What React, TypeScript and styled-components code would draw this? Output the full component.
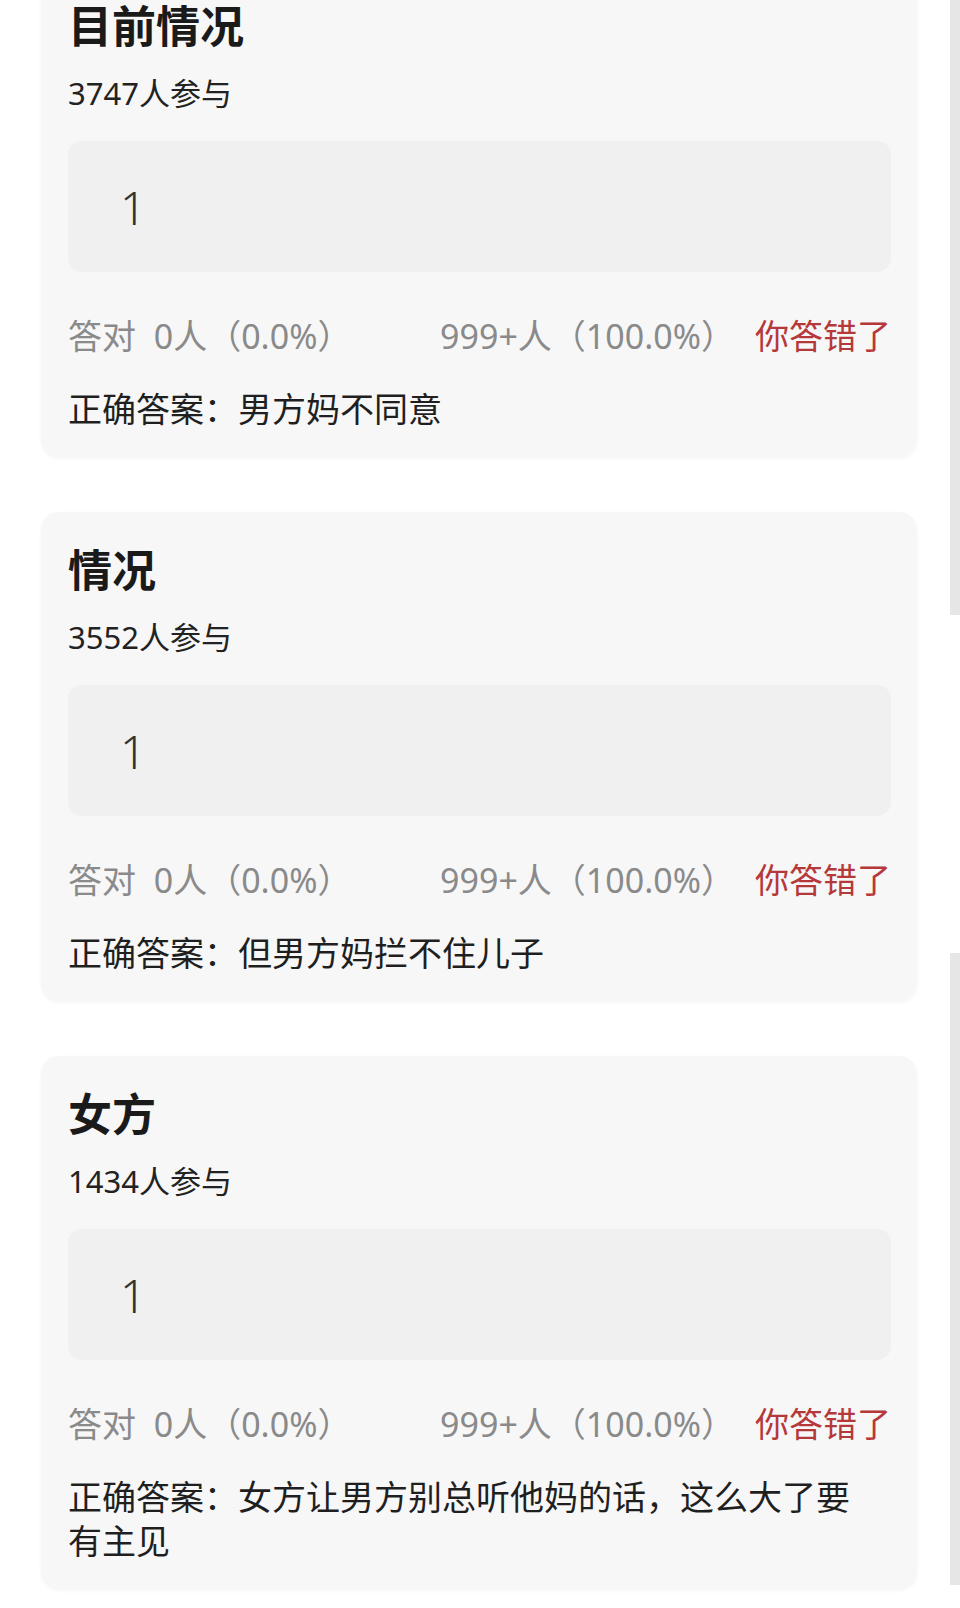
import styled, { createGlobalStyle } from 'styled-components';

const QUESTIONS = [
  {
    title: '目前情况',
    count: 3747,
    option: '1',
    answer: '男方妈不同意',
  },
  {
    title: '情况',
    count: 3552,
    option: '1',
    answer: '但男方妈拦不住儿子',
  },
  {
    title: '女方',
    count: 1434,
    option: '1',
    answer: '女方让男方别总听他妈的话，这么大了要有主见',
  },
];

const GlobalStyle = createGlobalStyle`
  body {
    margin: 0;
    background: #ffffff;
    font-family: 'Noto Sans', 'Noto Sans CJK SC', sans-serif;
    overflow: hidden;
  }
`;

const App = () => {
  return (
    <>
      <GlobalStyle />
      <Page>
        <List>
          {QUESTIONS.map(q => (
            <Card key={q.title}>
              <Title>{q.title}</Title>
              <Count>{q.count}人参与</Count>
              <Option>{q.option}</Option>
              <Stats>
                <span>答对&nbsp;&nbsp;0人（0.0%）</span>
                <div className="right">
                  <span>999+人（100.0%）</span>
                  <Wrong>你答错了</Wrong>
                </div>
              </Stats>
              <Answer>正确答案：{q.answer}</Answer>
            </Card>
          ))}
        </List>
        <Rail>
          <RailSegment $height={615} />
          <RailGap $height={338} />
          <RailSegment $height={632} />
        </Rail>
      </Page>
    </>
  );
};

export default App;

const Page = styled.div`
  display: flex;
  justify-content: space-between;
  width: 960px;
  height: 1608px;
  overflow: hidden;
`;

const List = styled.div`
  display: flex;
  flex-direction: column;
  gap: 54px;
  margin-top: -32px;
  padding-left: 41px;
`;

const Card = styled.div`
  width: 876px;
  box-sizing: border-box;
  padding: 30px 26px 27px 27px;
  background: #f7f7f7;
  border-radius: 18px;
  box-shadow: 0 1px 4px rgba(0, 0, 0, 0.03);
`;

const Title = styled.div`
  color: #1a1a1a;
  font-size: 44px;
  font-weight: 700;
  line-height: 56px;
`;

const Count = styled.div`
  margin-top: 19px;
  color: #222222;
  font-size: 31px;
  line-height: 40px;
`;

const Option = styled.div`
  margin-top: 28px;
  height: 131px;
  display: flex;
  align-items: center;
  padding-left: 52px;
  background: #f0f0f0;
  border-radius: 14px;
  color: #333333;
  font-size: 46px;
  font-weight: 300;
`;

const Stats = styled.div`
  margin-top: 42px;
  display: flex;
  justify-content: space-between;
  align-items: center;
  color: #8a8a8a;
  font-size: 34px;
  line-height: 44px;
  white-space: nowrap;

  .right {
    display: flex;
    gap: 20px;
  }
`;

const Wrong = styled.span`
  color: #b5383a;
`;

const Answer = styled.div`
  margin-top: 29px;
  padding-right: 30px;
  color: #1f1f1f;
  font-size: 34px;
  line-height: 44px;
`;

const Rail = styled.div`
  display: flex;
  flex-direction: column;
  width: 10px;
`;

const RailSegment = styled.div<{ $height: number }>`
  height: ${p => p.$height}px;
  background: #e6e6e6;
`;

const RailGap = styled.div<{ $height: number }>`
  height: ${p => p.$height}px;
`;
